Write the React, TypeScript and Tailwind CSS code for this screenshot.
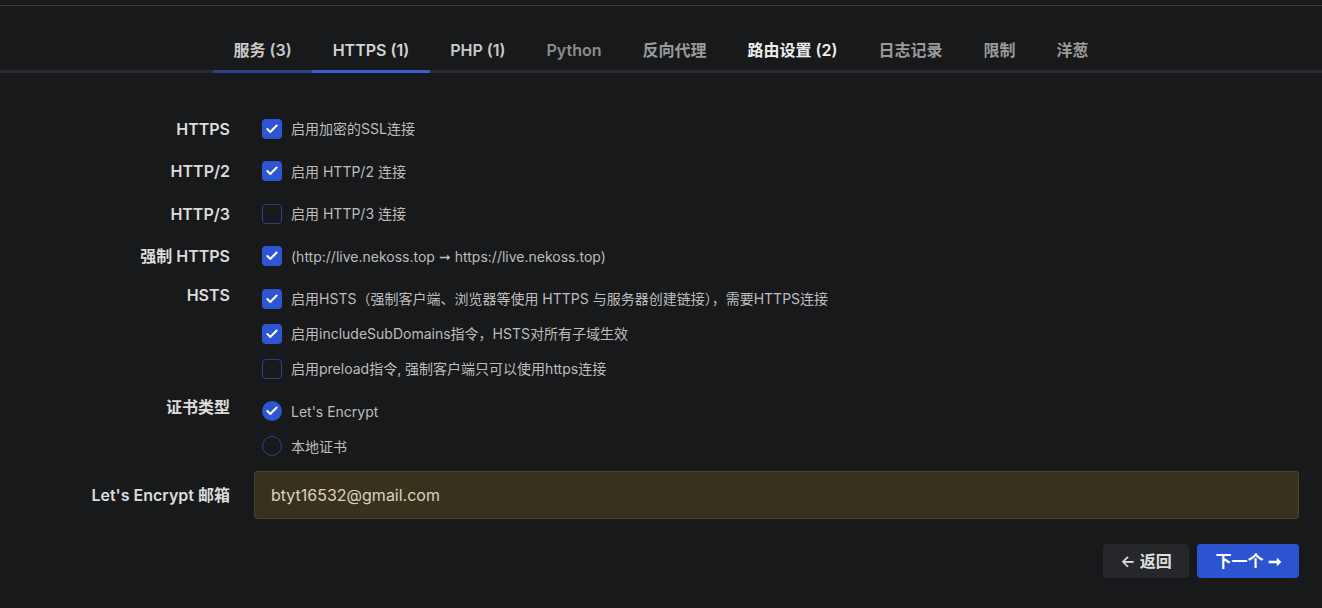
import { Check } from "lucide-react"

const tabs = [
  { label: "服务 (3)", tone: "text-[#c9c9c9]", line: "border-[#2c4488]" },
  { label: "HTTPS (1)", tone: "text-[#d4d4d4]", line: "border-[#3b5fd1]" },
  { label: "PHP (1)", tone: "text-[#c9c9c9]", line: "border-transparent" },
  { label: "Python", tone: "text-[#8c8c8c]", line: "border-transparent" },
  { label: "反向代理", tone: "text-[#9a9a9a]", line: "border-transparent" },
  { label: "路由设置 (2)", tone: "text-[#ededed]", line: "border-transparent" },
  { label: "日志记录", tone: "text-[#9a9a9a]", line: "border-transparent" },
  { label: "限制", tone: "text-[#9a9a9a]", line: "border-transparent" },
  { label: "洋葱", tone: "text-[#9a9a9a]", line: "border-transparent" },
]

type Opt = { text: string; on: boolean }

const fields: { label: string; multi?: boolean; radio?: boolean; options: Opt[] }[] = [
  { label: "HTTPS", options: [{ text: "启用加密的SSL连接", on: true }] },
  { label: "HTTP/2", options: [{ text: "启用 HTTP/2 连接", on: true }] },
  { label: "HTTP/3", options: [{ text: "启用 HTTP/3 连接", on: false }] },
  { label: "强制 HTTPS", options: [{ text: "(http://live.nekoss.top ➞ https://live.nekoss.top)", on: true }] },
  {
    label: "HSTS",
    multi: true,
    options: [
      { text: "启用HSTS（强制客户端、浏览器等使用 HTTPS 与服务器创建链接），需要HTTPS连接", on: true },
      { text: "启用includeSubDomains指令，HSTS对所有子域生效", on: true },
      { text: "启用preload指令, 强制客户端只可以使用https连接", on: false },
    ],
  },
  {
    label: "证书类型",
    multi: true,
    radio: true,
    options: [
      { text: "Let's Encrypt", on: true },
      { text: "本地证书", on: false },
    ],
  },
]

function Box({ on, radio }: { on: boolean; radio?: boolean }) {
  const shape = radio ? "rounded-full" : "rounded-[4px]"
  if (on) {
    return (
      <span className={`w-5 h-5 ${shape} bg-[#2e55d3] flex items-center justify-center shrink-0`}>
        <Check className="w-[14px] h-[14px] text-white" strokeWidth={3.5} />
      </span>
    )
  }
  return <span className={`w-5 h-5 ${shape} border border-[#2b418f] shrink-0`} />
}

export default function App() {
  return (
    <div
      className="min-h-[608px] bg-[#18191b] text-[#d6d6d6]"
      style={{ fontFamily: "Inter, 'Noto Sans CJK SC', sans-serif" }}
    >
      <div className="h-[5px]" />
      <div className="border-t border-[#3a3b3e]" />

      {/* tabs */}
      <div className="pt-[23px] border-b-[3px] border-[#2a2b2f]">
        <div className="flex justify-center -mb-[3px]">
          {tabs.map((t) => (
            <div
              key={t.label}
              className={`h-[44px] px-[20.5px] pt-[1px] flex items-center border-b-[3px] ${t.line} ${t.tone} text-[16px] font-semibold`}
            >
              {t.label}
            </div>
          ))}
        </div>
      </div>

      {/* form */}
      <div className="pr-[23px] pt-[38px] flex flex-col gap-[7.5px]">
        {fields.map((f) => (
          <div key={f.label} className="flex">
            <div
              className={`w-[230px] h-[35px] flex items-center justify-end text-[16px] font-semibold text-[#dcdcdc] ${f.multi ? "pb-2" : ""}`}
            >
              {f.label}
            </div>
            <div className="ml-6 pl-2 flex flex-col">
              {f.options.map((o) => (
                <div key={o.text} className="h-[35px] flex items-center gap-[9px]">
                  <Box on={o.on} radio={f.radio} />
                  <span className="text-[14px] text-[#bdbdbd]">{o.text}</span>
                </div>
              ))}
            </div>
          </div>
        ))}

        <div className="flex items-center">
          <div className="w-[230px] flex justify-end text-[16px] font-semibold text-[#dcdcdc]">
            Let's Encrypt 邮箱
          </div>
          <input
            className="ml-6 flex-1 h-12 rounded-[3px] bg-[#38321d] border border-[#48432c] px-4 text-[16px] text-[#d9d3bd] outline-none"
            defaultValue="btyt16532@gmail.com"
          />
        </div>

        <div className="flex justify-end gap-2 mt-[17px]">
          <button className="h-[34px] w-[86px] rounded-[4px] bg-[#26272a] text-[16px] font-semibold text-[#dedede]">
            ← 返回
          </button>
          <button className="h-[34px] w-[102px] rounded-[4px] bg-[#2c53d0] text-[16px] font-semibold text-white">
            下一个 ➞
          </button>
        </div>
      </div>
    </div>
  )
}
